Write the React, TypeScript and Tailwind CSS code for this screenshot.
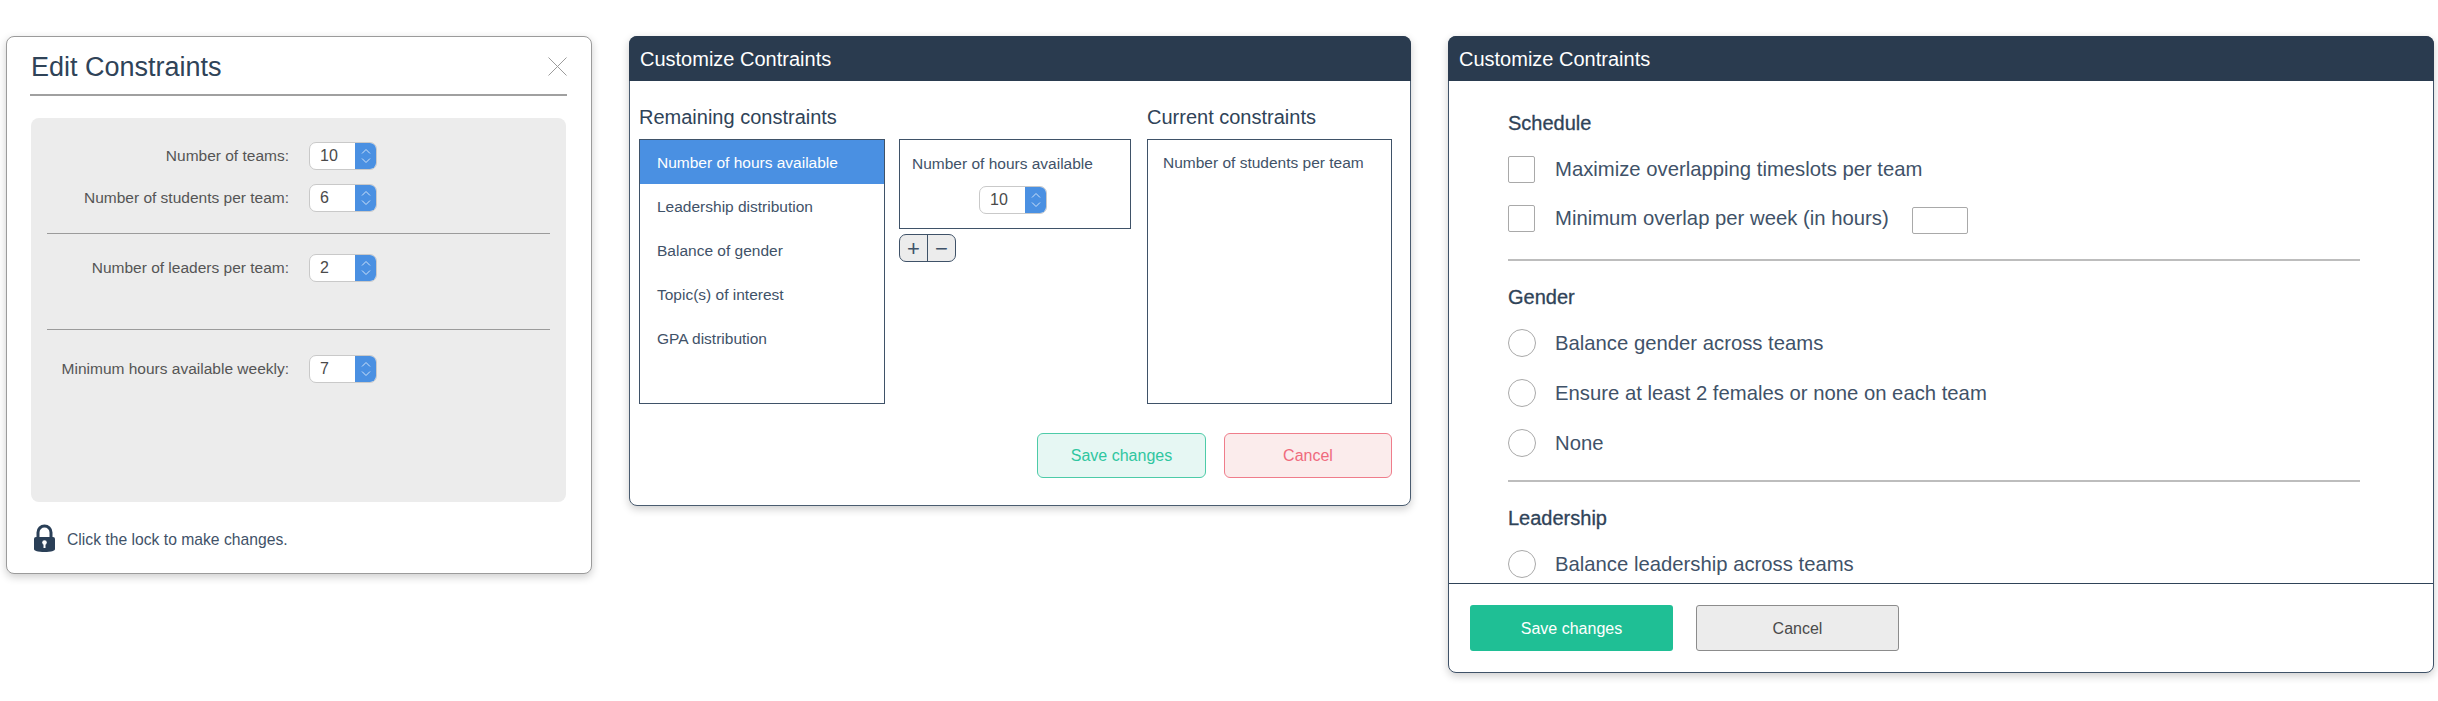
const leftRows = [
  { label: "Number of teams:", value: "10" },
  { label: "Number of students per team:", value: "6" },
];

const remaining = [
  "Number of hours available",
  "Leadership distribution",
  "Balance of gender",
  "Topic(s) of interest",
  "GPA distribution",
];

function Spinner({ value }: { value: string }) {
  return (
    <div className="flex h-[28px] w-[68px] shrink-0 overflow-hidden rounded-[7px] border border-[#c9c9c9] bg-white">
      <span className="flex-1 pl-[10px] text-[16px] leading-[26px] text-[#4a4a4a]">{value}</span>
      <span className="-my-px -mr-px flex w-[22px] items-center justify-center bg-[#4a90e2]">
        <svg width="12" height="18" viewBox="0 0 12 18" fill="none" stroke="#cfe2f8" strokeWidth="1">
          <path d="M2 6.5 6 2.5l4 4" />
          <path d="M2 11.5l4 4 4-4" />
        </svg>
      </span>
    </div>
  );
}

function LockIcon() {
  return (
    <svg width="21" height="28" viewBox="0 0 21 28" className="shrink-0">
      <path d="M4 15V8.500a6.500 6.500 0 0 1 13 0V15" fill="none" stroke="#2a3f57" strokeWidth="3" />
      <path
        d="M2 13h17a2 2 0 0 1 2 2v10c0 1-1 1.600-2 1.900-2.500.7-5.500 1.100-8.500 1.100S4.500 27.600 2 26.900C1 26.600 0 26 0 25V15a2 2 0 0 1 2-2z"
        fill="#2a3f57"
      />
      <circle cx="10.500" cy="18.500" r="2.300" fill="#fff" />
      <rect x="9.500" y="19" width="2" height="5" fill="#fff" />
    </svg>
  );
}

function CloseIcon() {
  return (
    <svg width="19" height="19" viewBox="0 0 19 19" fill="none" stroke="#9b9b9b" strokeWidth="1" className="mt-[2px]">
      <path d="M0.500 0.500l18 18M18.500 0.500l-18 18" />
    </svg>
  );
}

function Row({ label, value }: { label: string; value: string }) {
  return (
    <div className="flex items-center">
      <span className="w-[242px] text-right text-[15.500px] text-[#555]">{label}</span>
      <div className="ml-[20px]">
        <Spinner value={value} />
      </div>
    </div>
  );
}

function EditConstraints() {
  return (
    <div className="h-[538px] w-[586px] shrink-0 rounded-[8px] border border-[#9b9b9b] bg-white px-[24px] shadow-[0_3px_8px_rgba(0,0,0,0.2)]">
      <div className="-ml-px flex h-[59px] items-center justify-between border-b-2 border-[#a0a0a0]">
        <h1 className="pl-px pt-[4px] text-[27px] leading-none text-[#2f4358]">Edit Constraints</h1>
        <CloseIcon />
      </div>
      <div className="mr-px mt-[22px] h-[384px] rounded-[8px] bg-[#ececec] px-[16px] pt-[24px]">
        <div className="flex flex-col gap-[14px]">
          {leftRows.map((r) => (
            <Row key={r.label} {...r} />
          ))}
        </div>
        <div className="mt-[21px] border-t border-[#9b9b9b]" />
        <div className="mt-[20px]">
          <Row label="Number of leaders per team:" value="2" />
        </div>
        <div className="mt-[47px] border-t border-[#9b9b9b]" />
        <div className="mt-[25px]">
          <Row label="Minimum hours available weekly:" value="7" />
        </div>
      </div>
      <div className="mt-[22px] flex items-center gap-[12px] pl-[3px]">
        <LockIcon />
        <span className="mt-[3px] text-[15.700px] text-[#3f5268]">Click the lock to make changes.</span>
      </div>
    </div>
  );
}

function Header() {
  return (
    <div className="-mx-px -mt-px flex h-[45px] shrink-0 items-center rounded-t-[8px] bg-[#2a3b4f] pl-[11px] text-[20px] text-white">
      Customize Contraints
    </div>
  );
}

function CustomizeLists() {
  return (
    <div className="h-[470px] w-[782px] shrink-0 rounded-[8px] border border-[#4a5c70] bg-white shadow-[0_3px_8px_rgba(0,0,0,0.2)]">
      <Header />
      <div className="pl-[9px] pr-[18px] pt-[18px]">
        <div className="flex gap-[14px]">
          <div className="w-[246px]">
            <h2 className="mb-[4px] text-[20px] leading-[36px] text-[#2f4358]">Remaining constraints</h2>
            <ul className="h-[265px] border border-[#3f5268]">
              {remaining.map((item, i) => (
                <li
                  key={item}
                  className={
                    i === 0
                      ? "h-[44px] bg-[#4a90e2] pl-[17px] text-[15.500px] leading-[45px] text-white"
                      : "h-[44px] pl-[17px] text-[15.500px] leading-[45px] text-[#3f5268]"
                  }
                >
                  {item}
                </li>
              ))}
            </ul>
          </div>
          <div className="w-[232px] pt-[40px]">
            <div className="flex h-[90px] flex-col border border-[#3f5268] pl-[12px] pt-[14px]">
              <span className="text-[15.500px] leading-[20px] text-[#3f5268]">Number of hours available</span>
              <div className="ml-[67px] mt-[12px]">
                <Spinner value="10" />
              </div>
            </div>
            <div className="mt-[5px] flex h-[28px] w-[57px] overflow-hidden rounded-[7px] border border-[#3f5268] bg-[#ececec]">
              <span className="flex flex-1 items-center justify-center border-r border-[#3f5268] text-[22px] font-light text-[#3f5268]">
                +
              </span>
              <span className="flex flex-1 items-center justify-center text-[22px] font-light text-[#3f5268]">
                −
              </span>
            </div>
          </div>
          <div className="ml-[2px] w-[245px]">
            <h2 className="mb-[4px] text-[20px] leading-[36px] text-[#2f4358]">Current constraints</h2>
            <div className="h-[265px] border border-[#3f5268] pl-[15px] text-[15.500px] leading-[45px] text-[#3f5268]">
              Number of students per team
            </div>
          </div>
        </div>
        <div className="mt-[29px] flex justify-end gap-[18px]">
          <button className="h-[45px] w-[169px] rounded-[6px] border border-[#4dcba8] bg-[#e6f7f3] text-[16px] text-[#2fc6a0]">
            Save changes
          </button>
          <button className="h-[45px] w-[168px] rounded-[6px] border border-[#ef7d8b] bg-[#fbecec] text-[16px] text-[#ef6a7c]">
            Cancel
          </button>
        </div>
      </div>
    </div>
  );
}

function CheckRow({ label, input }: { label: string; input?: boolean }) {
  return (
    <div className="flex h-[27px] items-center">
      <span className="size-[27px] shrink-0 rounded-[2px] border border-[#a9a9a9] bg-white" />
      <span className="ml-[20px] text-[20.300px] text-[#3f5268]">{label}</span>
      {input && <span className="ml-[23px] mt-[3px] h-[27px] w-[56px] rounded-[2px] border border-[#a9a9a9]" />}
    </div>
  );
}

function RadioRow({ label }: { label: string }) {
  return (
    <div className="flex h-[28px] items-center">
      <span className="size-[28px] shrink-0 rounded-full border border-[#a9a9a9] bg-white" />
      <span className="ml-[19px] text-[20.300px] text-[#3f5268]">{label}</span>
    </div>
  );
}

function SectionTitle({ children, className }: { children: string; className?: string }) {
  return (
    <h3 className={`text-[20px] leading-[26px] text-[#2f4358] [-webkit-text-stroke:0.3px_#2f4358] ${className ?? ""}`}>
      {children}
    </h3>
  );
}

function CustomizeForm() {
  return (
    <div className="flex h-[637px] w-[986px] shrink-0 flex-col rounded-[8px] border border-[#3f5268] bg-white shadow-[0_3px_8px_rgba(0,0,0,0.2)]">
      <Header />
      <div className="h-[502px] shrink-0 overflow-hidden pl-[59px] pr-[73px] pt-[29px]">
        <SectionTitle>Schedule</SectionTitle>
        <div className="mt-[20px] flex flex-col gap-[22px]">
          <CheckRow label="Maximize overlapping timeslots per team" />
          <CheckRow label="Minimum overlap per week (in hours)" input />
        </div>
        <div className="mt-[27px] border-t-2 border-[#bdbdbd]" />
        <SectionTitle className="mt-[23px]">Gender</SectionTitle>
        <div className="mt-[19px] flex flex-col gap-[22px]">
          <RadioRow label="Balance gender across teams" />
          <RadioRow label="Ensure at least 2 females or none on each team" />
          <RadioRow label="None" />
        </div>
        <div className="mt-[23px] border-t-2 border-[#bdbdbd]" />
        <SectionTitle className="mt-[23px]">Leadership</SectionTitle>
        <div className="mt-[19px]">
          <RadioRow label="Balance leadership across teams" />
        </div>
      </div>
      <div className="flex flex-1 gap-[23px] border-t border-[#2f4358] pl-[21px] pt-[21px]">
        <button className="h-[46px] w-[203px] rounded-[3px] bg-[#1fbf95] pt-px text-[16px] text-white">Save changes</button>
        <button className="h-[46px] w-[203px] rounded-[3px] border border-[#8c8c8c] bg-[#ececec] pt-px text-[16px] text-[#4a4a4a]">
          Cancel
        </button>
      </div>
    </div>
  );
}

export default function App() {
  return (
    <div className="flex h-[701px] w-[2438px] items-start gap-[37px] overflow-hidden bg-white pl-[6px] pt-[36px] font-['Liberation_Sans',Arial,sans-serif]">
      <EditConstraints />
      <CustomizeLists />
      <CustomizeForm />
    </div>
  );
}
